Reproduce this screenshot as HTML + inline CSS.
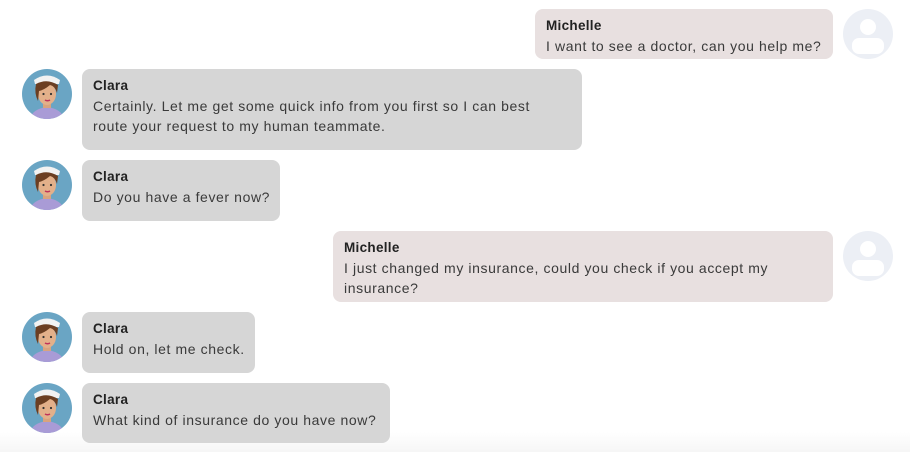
<!DOCTYPE html>
<html><head><style>
body{margin:0;width:910px;height:452px;background:#fff;font-family:"Liberation Sans",sans-serif;position:relative;overflow:hidden}
.b{position:absolute;border-radius:8px;padding:7px 11px 0 11px;box-sizing:border-box;font-size:14px;line-height:20px;color:#3a3a3a;letter-spacing:0.6px;white-space:nowrap}
.b b{display:block;color:#222;font-weight:bold;font-size:13.5px;letter-spacing:0.3px}
.c{background:#d6d6d6}
.m{background:#e8e0e0}
.av{position:absolute;width:50px;height:50px}
.bot{position:absolute;left:0;top:432px;width:910px;height:20px;background:linear-gradient(#fff,#f6f6f6)}
</style></head><body>
<svg width="0" height="0" style="position:absolute"><defs>
<g id="clara"><circle cx="25" cy="25" r="25" fill="#6aa5c4"/>
<clipPath id="cp"><circle cx="25" cy="25" r="25"/></clipPath>
<g clip-path="url(#cp)">
<path d="M8 50 Q10 40 25 38 Q40 40 42 50Z" fill="#a99bd6"/>
<rect x="21" y="30" width="8" height="9" fill="#d9a37e"/>
<path d="M12 11 Q25 2 38 11 L37 15 L13 15Z" fill="#f2f2f2"/>
<ellipse cx="25" cy="25" rx="9" ry="11" fill="#e3b08a"/>
<path d="M14 15 Q25 9 36 16 L35 24 Q33 17 28 16 Q22 21 17 22 L16 32 Q12 24 14 15Z" fill="#6b3e22"/>
<circle cx="21.5" cy="25" r="1.1" fill="#333"/><circle cx="29" cy="25" r="1.1" fill="#333"/>
<path d="M23 31 Q25.5 32.5 28 31" stroke="#c0335a" stroke-width="1.5" fill="none"/>
</g></g>
<g id="user"><circle cx="25" cy="25" r="25" fill="#eceff5"/>
<circle cx="25" cy="18" r="8" fill="#fff"/>
<rect x="9" y="29" width="32" height="16" rx="7" fill="#fff"/></g>
</defs></svg>

<div class="b m" style="left:535px;top:9px;width:298px;height:50px"><b>Michelle</b>I want to see a doctor, can you help me?</div>
<svg class="av" style="left:843px;top:9px"><use href="#user"/></svg>

<svg class="av" style="left:22px;top:69px"><use href="#clara"/></svg>
<div class="b c" style="left:82px;top:69px;width:500px;height:81px"><b>Clara</b>Certainly. Let me get some quick info from you first so I can best<br>route your request to my human teammate.</div>

<svg class="av" style="left:22px;top:160px"><use href="#clara"/></svg>
<div class="b c" style="left:82px;top:160px;width:198px;height:61px"><b>Clara</b>Do you have a fever now?</div>

<div class="b m" style="left:333px;top:231px;width:500px;height:71px"><b>Michelle</b>I just changed my insurance, could you check if you accept my<br>insurance?</div>
<svg class="av" style="left:843px;top:231px"><use href="#user"/></svg>

<div class="bot"></div>
<svg class="av" style="left:22px;top:312px"><use href="#clara"/></svg>
<div class="b c" style="left:82px;top:312px;width:173px;height:61px"><b>Clara</b>Hold on, let me check.</div>

<svg class="av" style="left:22px;top:383px"><use href="#clara"/></svg>
<div class="b c" style="left:82px;top:383px;width:308px;height:60px"><b>Clara</b>What kind of insurance do you have now?</div>
</body></html>
